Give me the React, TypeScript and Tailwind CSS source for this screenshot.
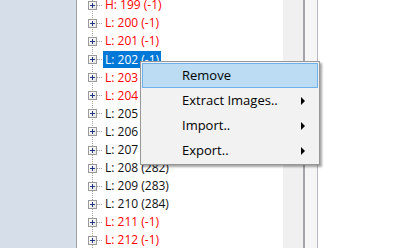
import React from "react";

const rows: { label: string; red: boolean }[] = [
  { label: "H: 199 (-1)", red: true },
  { label: "L: 200 (-1)", red: true },
  { label: "L: 201 (-1)", red: true },
  { label: "L: 202 (-1)", red: false },
  { label: "L: 203 (-1)", red: true },
  { label: "L: 204 (-1)", red: true },
  { label: "L: 205 (279)", red: false },
  { label: "L: 206 (280)", red: false },
  { label: "L: 207 (281)", red: false },
  { label: "L: 208 (282)", red: false },
  { label: "L: 209 (283)", red: false },
  { label: "L: 210 (284)", red: false },
  { label: "L: 211 (-1)", red: true },
  { label: "L: 212 (-1)", red: true },
];

function PlusBox() {
  return (
    <div className="relative z-10 w-[9px] h-[9px] border border-[#9a9a9a] bg-gradient-to-br from-white to-[#e6e6e6] flex items-center justify-center shrink-0">
      <svg width="7" height="7" viewBox="0 0 7 7">
        <rect x="1" y="3" width="5" height="1" fill="#23367f" />
        <rect x="3" y="1" width="1" height="5" fill="#23367f" />
      </svg>
    </div>
  );
}

function Arrow() {
  return (
    <svg width="5" height="8" viewBox="0 0 5 8" className="absolute right-[12px]">
      <path d="M0 0 L4 4 L0 8 Z" fill="#000" />
    </svg>
  );
}

export default function App() {
  const selectedIndex = 3;
  return (
    <div
      className="relative w-[400px] h-[248px] flex overflow-hidden bg-white"
      style={{ fontFamily: '"Open Sans", "Noto Sans", sans-serif' }}
    >
      <div className="w-[76px] shrink-0 bg-[#d5dee9]" />
      <div className="w-[1px] shrink-0 bg-[#a0a0a0]" />
      <div className="w-[206px] shrink-0 relative bg-white">
        <div className="absolute left-[15px] top-0 bottom-0 border-l border-dotted border-[#a0a0a0]" />
        <div className="flex flex-col -mt-[3.8px]">
          {rows.map((r, i) => {
            const sel = i === selectedIndex;
            return (
              <div key={i} className="h-[18.1px] flex items-center pl-[11px]">
                <PlusBox />
                <div className="w-[5px] border-t border-dotted border-[#a0a0a0]" />
                <div
                  className={
                    "ml-[1px] px-[2px] h-[17px] flex items-center text-[12px] leading-none whitespace-nowrap " +
                    (sel
                      ? "bg-[#0078d7] text-white"
                      : r.red
                      ? "text-[#ff0000]"
                      : "text-[#111]")
                  }
                >
                  {r.label}
                </div>
              </div>
            );
          })}
        </div>
      </div>
      <div className="w-[20px] shrink-0 bg-[#f0f0f0]" />
      <div className="w-[2px] shrink-0 bg-[#a3a3ab]" />
      <div className="w-[12px] shrink-0 bg-[#f6f6f6]" />
      <div className="w-[1px] shrink-0 bg-[#b8b8c0]" />
      <div className="flex-1 bg-white" />

      <div className="absolute left-[140px] top-[61px] w-[180px] h-[104px] bg-[#f2f2f2] border border-[#979797] p-[1px] shadow-[2px_2px_2px_rgba(0,0,0,0.35)] flex flex-col text-[13px] text-black">
        <div className="relative h-[25px] flex items-center pl-[39px] bg-[#bcdcf4] border border-[#6fb0ea]">
          Remove
        </div>
        <div className="relative h-[25px] flex items-center pl-[40px]">
          Extract Images..
          <Arrow />
        </div>
        <div className="relative h-[25px] flex items-center pl-[40px]">
          Import..
          <Arrow />
        </div>
        <div className="relative h-[25px] flex items-center pl-[40px]">
          Export..
          <Arrow />
        </div>
      </div>
    </div>
  );
}
